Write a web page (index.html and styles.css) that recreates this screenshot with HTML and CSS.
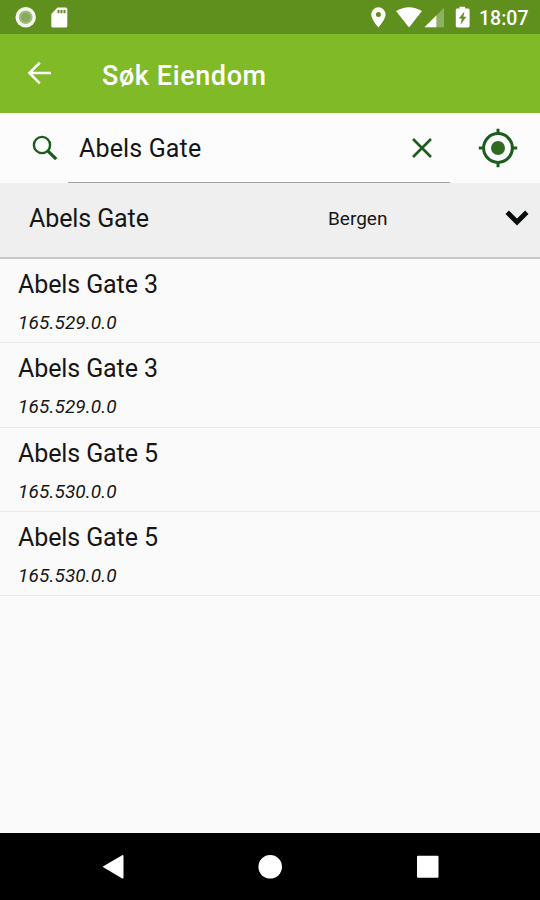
FILE: index.html
```
<!DOCTYPE html>
<html lang="no">
<head>
    <meta charset="UTF-8">
    <meta name="viewport" content="width=device-width, initial-scale=1.0">
    <title>Søk Eiendom</title>
    <link rel="stylesheet" href="styles.css">
</head>
<body>

<!-- Android status bar -->
<div class="status-bar">
    <svg class="status-left" width="80" height="34" viewBox="0 0 80 34">
        <circle cx="25.7" cy="17.3" r="10.2" fill="#f4f8ec"/>
        <circle cx="25.7" cy="17.3" r="6.8" fill="#9dbb7b"/>
        <circle cx="25.7" cy="17.3" r="4.5" fill="#86ab5a"/>
        <path d="M57.5 7.5H65.8Q67.3 7.5 67.3 9V26Q67.3 27.5 65.8 27.5H53Q51.3 27.5 51.3 26V14Z" fill="#fff"/>
        <path d="M57.5 10h2v3.2h-2zM60.5 10h2v3.2h-2zM63.5 10h2v3.2h-2z" fill="#5f8f1c"/>
    </svg>
    <svg class="status-right" width="112" height="34" viewBox="0 0 112 34">
        <path fill-rule="evenodd" d="M10.4 7.3a7.2 7.2 0 0 1 7.2 7.2c0 5-7.2 12.9-7.2 12.9s-7.2-7.9-7.2-12.9a7.2 7.2 0 0 1 7.2-7.2zm0 4.6a2.5 2.5 0 1 0 0 5a2.5 2.5 0 1 0 0-5z" fill="#fff"/>
        <path d="M28 11.1Q41 3.5 54 11.1L41 27.4Z" fill="#fff"/>
        <path d="M76 7.8V27.3H56.5Z" fill="#8fb062"/>
        <path d="M68.3 15.5V27.3H56.5Z" fill="#fff"/>
        <path d="M89 8.6H91.5V6.8h5.6V8.6h2.5Q101.6 8.6 101.6 10V26Q101.6 27.4 100.2 27.4H89.2Q87.8 27.4 87.8 26V10Q87.8 8.6 89 8.6Z" fill="#fff"/>
        <path d="M96.4 11.5L90.8 18.5H93.8L92.4 24.8L98.4 16.8H95.4Z" fill="#5f8f1c"/>
    </svg>
    <span class="clock">18:07</span>
</div>

<header>
    <a href="#" class="back">
        <svg width="24" height="24" viewBox="0 0 24 24" fill="none" stroke="#fff" stroke-width="2.5">
            <path d="M24 12H2.4M12.8 1.7L2.4 12L12.8 22.3"/>
        </svg>
    </a>
    <h1>Søk Eiendom</h1>
</header>

<main>
    <div class="search">
        <svg class="search-icon" width="26" height="26" viewBox="0 0 26 26" fill="none" stroke="#1c5c1c">
            <circle cx="10" cy="10" r="8.1" stroke-width="2.4"/>
            <path d="M15.8 15.8L24.2 24.2" stroke-width="3.2"/>
        </svg>
        <div class="search-field">
            <span class="search-text">Abels Gate</span>
            <svg width="20" height="20" viewBox="0 0 20 20" fill="none" stroke="#1c5c1c" stroke-width="2.6">
                <path d="M1 1L19 19M19 1L1 19"/>
            </svg>
        </div>
        <svg class="locate" width="40" height="40" viewBox="0 0 40 40" fill="none" stroke="#1c5c1c" stroke-width="3">
            <circle cx="20" cy="20" r="14.4"/>
            <circle cx="20" cy="20" r="7" fill="#316b20" stroke="none"/>
            <path d="M20 0.8V6M20 34V39.2M0.8 20H6M34 20H39.2"/>
        </svg>
    </div>

    <div class="group">
        <span class="street">Abels Gate</span>
        <span class="city">Bergen</span>
        <svg width="24" height="16" viewBox="0 0 24 16" fill="none" stroke="#0a0e0a" stroke-width="4.8">
            <path d="M2.2 2.3L12 12L21.8 2.3"/>
        </svg>
    </div>

    <ul class="results">
        <li><span class="address">Abels Gate 3</span><span class="matrikkel">165.529.0.0</span></li>
        <li><span class="address">Abels Gate 3</span><span class="matrikkel">165.529.0.0</span></li>
        <li><span class="address">Abels Gate 5</span><span class="matrikkel">165.530.0.0</span></li>
        <li><span class="address">Abels Gate 5</span><span class="matrikkel">165.530.0.0</span></li>
    </ul>
</main>

<!-- Android navigation buttons -->
<footer>
    <svg width="540" height="67" viewBox="0 0 540 67" fill="#fff">
        <path d="M102.5 33.8L122.2 22.2Q123.5 21.8 123.5 23V44.6Q123.5 45.8 122.2 45.4Z"/>
        <circle cx="270.2" cy="33.8" r="11.8"/>
        <rect x="417" y="22.8" width="21.5" height="22" rx="1"/>
    </svg>
</footer>

</body>
</html>
```
FILE: styles.css
```
* {
    box-sizing: border-box;
}

body {
    margin: 0;
    height: 900px;
    display: flex;
    flex-direction: column;
    font-family: Roboto, sans-serif;
    background-color: #fafafa;
    color: #161616;
    overflow: hidden;
}

svg {
    display: block;
    flex-shrink: 0;
}

.status-bar {
    height: 34px;
    display: flex;
    align-items: center;
    background-color: #5f8f1c;
    color: #fff;
}

.status-right {
    margin-left: 288px;
}

.clock {
    margin: 3px 0 0 -1px;
    font-size: 19.5px;
    font-weight: 500;
}

header {
    height: 79px;
    display: flex;
    align-items: center;
    padding-left: 27px;
    background-color: #80ba27;
    color: #fff;
}

.back {
    margin-top: -1px;
}

h1 {
    margin: 4px 0 0 51px;
    font-size: 27px;
    font-weight: 500;
    letter-spacing: 0.6px;
}

main {
    flex: 1;
}

.search {
    height: 70px;
    display: flex;
    align-items: flex-start;
    background-color: #fcfcfc;
}

.search-icon {
    margin: 22px 0 0 32px;
}

.search-field {
    width: 382px;
    height: 70px;
    margin-left: 10px;
    padding: 0 18px 0 11px;
    display: flex;
    align-items: center;
    justify-content: space-between;
    border-bottom: 1px solid #9ea39e;
}

.search-text {
    margin-top: 2px;
    font-size: 25px;
    letter-spacing: 0.15px;
}

.locate {
    margin: 15px 0 0 28px;
}

.group {
    height: 76px;
    display: flex;
    align-items: center;
    padding: 0 11px 4px 29px;
    background-color: #efefef;
    border-bottom: 2px solid #c8c8c8;
}

.street {
    width: 299px;
    font-size: 25px;
    letter-spacing: -0.1px;
}

.city {
    flex: 1;
    font-size: 19px;
}

.results {
    margin: 0;
    padding: 0;
    list-style: none;
}

.results li {
    height: 84.3px;
    padding: 10px 18px 0;
    border-bottom: 1px solid #e9e9e9;
}

.address, .matrikkel {
    display: block;
}

.address {
    font-size: 25px;
    line-height: 32px;
    letter-spacing: -0.1px;
}

.matrikkel {
    margin-top: 9px;
    font-size: 19px;
    line-height: 26px;
    font-style: italic;
    letter-spacing: 0.12px;
}

footer {
    height: 67px;
    background-color: #000;
}
```
